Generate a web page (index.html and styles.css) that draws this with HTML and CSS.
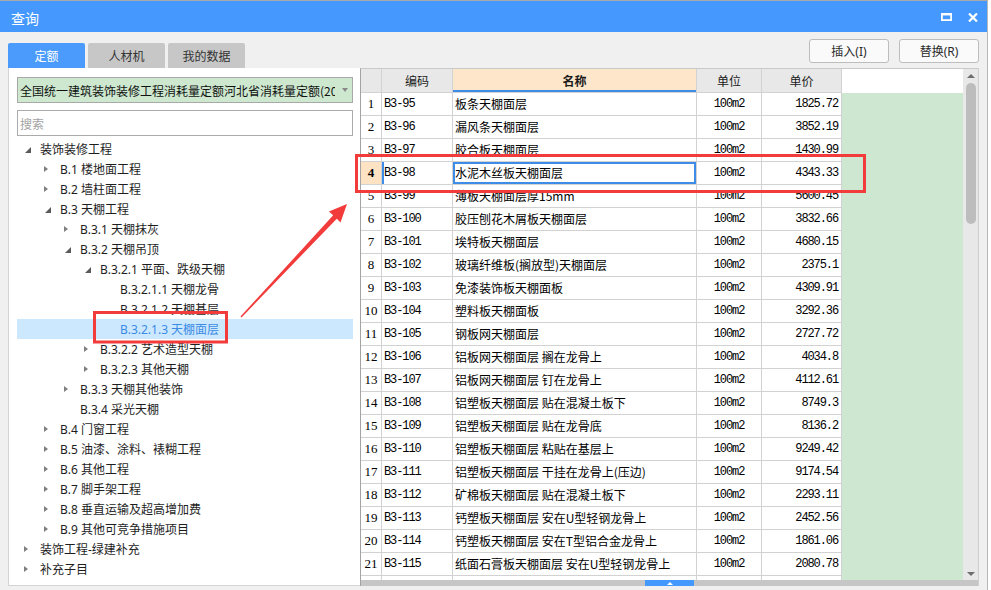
FILE: index.html
```html
<!DOCTYPE html>
<html lang="zh-CN">
<head>
<meta charset="utf-8">
<title>查询</title>
<link rel="stylesheet" href="styles.css">
</head>
<body>
<div class="window">
  <div class="titlebar">
    <span class="title">查询</span>
    <div class="win-btns">
      <svg class="ic-max" width="11" height="8" viewBox="0 0 11 8"><rect x="0.9" y="1.2" width="9.2" height="5.9" fill="none" stroke="#fff" stroke-width="1.8"/><rect x="0" y="0" width="11" height="2.4" fill="#fff"/></svg>
      <svg class="ic-close" width="10" height="9" viewBox="0 0 10 9"><path d="M1 0.5L9 8.5M9 0.5L1 8.5" stroke="#fff" stroke-width="2.2"/></svg>
    </div>
  </div>

  <div class="toolbar">
    <div class="tabs">
      <div class="tab active">定额</div>
      <div class="tab">人材机</div>
      <div class="tab">我的数据</div>
    </div>
    <div class="actions">
      <div class="btn">插入(I)</div>
      <div class="btn">替换(R)</div>
    </div>
  </div>

  <div class="main">
    <div class="left">
      <div class="combo">
        <span class="combo-text">全国统一建筑装饰装修工程消耗量定额河北省消耗量定额(2012)</span>
        <span class="combo-arrow"></span>
      </div>
      <div class="search">搜索</div>
      <div class="tree">
        <div class="node"><span class="tog exp"></span><span class="lbl">装饰装修工程</span></div>
        <div class="node l1"><span class="tog col"></span><span class="lbl">B.1 楼地面工程</span></div>
        <div class="node l1"><span class="tog col"></span><span class="lbl">B.2 墙柱面工程</span></div>
        <div class="node l1"><span class="tog exp"></span><span class="lbl">B.3 天棚工程</span></div>
        <div class="node l2"><span class="tog col"></span><span class="lbl">B.3.1 天棚抹灰</span></div>
        <div class="node l2"><span class="tog exp"></span><span class="lbl">B.3.2 天棚吊顶</span></div>
        <div class="node l3"><span class="tog exp"></span><span class="lbl">B.3.2.1 平面、跌级天棚</span></div>
        <div class="node l4"><span class="tog"></span><span class="lbl">B.3.2.1.1 天棚龙骨</span></div>
        <div class="node l4"><span class="tog"></span><span class="lbl">B.3.2.1.2 天棚基层</span></div>
        <div class="node l4 sel"><span class="tog"></span><span class="lbl">B.3.2.1.3 天棚面层</span></div>
        <div class="node l3"><span class="tog col"></span><span class="lbl">B.3.2.2 艺术造型天棚</span></div>
        <div class="node l3"><span class="tog col"></span><span class="lbl">B.3.2.3 其他天棚</span></div>
        <div class="node l2"><span class="tog col"></span><span class="lbl">B.3.3 天棚其他装饰</span></div>
        <div class="node l2"><span class="tog"></span><span class="lbl">B.3.4 采光天棚</span></div>
        <div class="node l1"><span class="tog col"></span><span class="lbl">B.4 门窗工程</span></div>
        <div class="node l1"><span class="tog col"></span><span class="lbl">B.5 油漆、涂料、裱糊工程</span></div>
        <div class="node l1"><span class="tog col"></span><span class="lbl">B.6 其他工程</span></div>
        <div class="node l1"><span class="tog col"></span><span class="lbl">B.7 脚手架工程</span></div>
        <div class="node l1"><span class="tog col"></span><span class="lbl">B.8 垂直运输及超高增加费</span></div>
        <div class="node l1"><span class="tog col"></span><span class="lbl">B.9 其他可竞争措施项目</span></div>
        <div class="node"><span class="tog col"></span><span class="lbl">装饰工程-绿建补充</span></div>
        <div class="node"><span class="tog col"></span><span class="lbl">补充子目</span></div>
      </div>
    </div>

    <div class="right">
      <div class="grid-wrap">
        <div class="grid">
          <div class="row head">
            <div class="c num"></div>
            <div class="c hc">编码</div>
            <div class="c hc name-head">名称</div>
            <div class="c hc">单位</div>
            <div class="c hc">单价</div>
            <div class="c fill-head"></div>
          </div>
          <div class="row"><div class="c num">1</div><div class="c code">B3-95</div><div class="c name">板条天棚面层</div><div class="c unit">100m2</div><div class="c price">1825.72</div><div class="c fill"></div></div>
          <div class="row"><div class="c num">2</div><div class="c code">B3-96</div><div class="c name">漏风条天棚面层</div><div class="c unit">100m2</div><div class="c price">3852.19</div><div class="c fill"></div></div>
          <div class="row"><div class="c num">3</div><div class="c code">B3-97</div><div class="c name">胶合板天棚面层</div><div class="c unit">100m2</div><div class="c price">1430.99</div><div class="c fill"></div></div>
          <div class="row cur"><div class="c num">4</div><div class="c code">B3-98</div><div class="c name focus">水泥木丝板天棚面层</div><div class="c unit">100m2</div><div class="c price">4343.33</div><div class="c fill"></div></div>
          <div class="row"><div class="c num">5</div><div class="c code">B3-99</div><div class="c name">薄板天棚面层厚15mm</div><div class="c unit">100m2</div><div class="c price">5600.45</div><div class="c fill"></div></div>
          <div class="row"><div class="c num">6</div><div class="c code">B3-100</div><div class="c name">胶压刨花木屑板天棚面层</div><div class="c unit">100m2</div><div class="c price">3832.66</div><div class="c fill"></div></div>
          <div class="row"><div class="c num">7</div><div class="c code">B3-101</div><div class="c name">埃特板天棚面层</div><div class="c unit">100m2</div><div class="c price">4680.15</div><div class="c fill"></div></div>
          <div class="row"><div class="c num">8</div><div class="c code">B3-102</div><div class="c name">玻璃纤维板(搁放型)天棚面层</div><div class="c unit">100m2</div><div class="c price">2375.1</div><div class="c fill"></div></div>
          <div class="row"><div class="c num">9</div><div class="c code">B3-103</div><div class="c name">免漆装饰板天棚面板</div><div class="c unit">100m2</div><div class="c price">4309.91</div><div class="c fill"></div></div>
          <div class="row"><div class="c num">10</div><div class="c code">B3-104</div><div class="c name">塑料板天棚面板</div><div class="c unit">100m2</div><div class="c price">3292.36</div><div class="c fill"></div></div>
          <div class="row"><div class="c num">11</div><div class="c code">B3-105</div><div class="c name">钢板网天棚面层</div><div class="c unit">100m2</div><div class="c price">2727.72</div><div class="c fill"></div></div>
          <div class="row"><div class="c num">12</div><div class="c code">B3-106</div><div class="c name">铝板网天棚面层 搁在龙骨上</div><div class="c unit">100m2</div><div class="c price">4034.8</div><div class="c fill"></div></div>
          <div class="row"><div class="c num">13</div><div class="c code">B3-107</div><div class="c name">铝板网天棚面层 钉在龙骨上</div><div class="c unit">100m2</div><div class="c price">4112.61</div><div class="c fill"></div></div>
          <div class="row"><div class="c num">14</div><div class="c code">B3-108</div><div class="c name">铝塑板天棚面层 贴在混凝土板下</div><div class="c unit">100m2</div><div class="c price">8749.3</div><div class="c fill"></div></div>
          <div class="row"><div class="c num">15</div><div class="c code">B3-109</div><div class="c name">铝塑板天棚面层 贴在龙骨底</div><div class="c unit">100m2</div><div class="c price">8136.2</div><div class="c fill"></div></div>
          <div class="row"><div class="c num">16</div><div class="c code">B3-110</div><div class="c name">铝塑板天棚面层 粘贴在基层上</div><div class="c unit">100m2</div><div class="c price">9249.42</div><div class="c fill"></div></div>
          <div class="row"><div class="c num">17</div><div class="c code">B3-111</div><div class="c name">铝塑板天棚面层 干挂在龙骨上(压边)</div><div class="c unit">100m2</div><div class="c price">9174.54</div><div class="c fill"></div></div>
          <div class="row"><div class="c num">18</div><div class="c code">B3-112</div><div class="c name">矿棉板天棚面层 贴在混凝土板下</div><div class="c unit">100m2</div><div class="c price">2293.11</div><div class="c fill"></div></div>
          <div class="row"><div class="c num">19</div><div class="c code">B3-113</div><div class="c name">钙塑板天棚面层 安在U型轻钢龙骨上</div><div class="c unit">100m2</div><div class="c price">2452.56</div><div class="c fill"></div></div>
          <div class="row"><div class="c num">20</div><div class="c code">B3-114</div><div class="c name">钙塑板天棚面层 安在T型铝合金龙骨上</div><div class="c unit">100m2</div><div class="c price">1861.06</div><div class="c fill"></div></div>
          <div class="row"><div class="c num">21</div><div class="c code">B3-115</div><div class="c name">纸面石膏板天棚面层 安在U型轻钢龙骨上</div><div class="c unit">100m2</div><div class="c price">2080.78</div><div class="c fill"></div></div>
          <div class="row"><div class="c num"></div><div class="c code"></div><div class="c name"></div><div class="c unit"></div><div class="c price"></div><div class="c fill"></div></div>
        </div>
        <div class="vscroll">
          <span class="arr-up"></span>
          <span class="thumb"></span>
          <span class="spacer"></span>
          <span class="arr-down"></span>
        </div>
      </div>
      <div class="hbar"><span class="handle"></span></div>
    </div>
  </div>

  <svg class="annot" width="991" height="590" viewBox="0 0 991 590">
    <rect x="94.5" y="312.5" width="132" height="29.5" fill="none" stroke="#f23c3c" stroke-width="3"/>
    <rect x="356.5" y="155.5" width="508" height="36" fill="none" stroke="#f23c3c" stroke-width="3"/>
    <polygon points="240.5,316.5 333.2,215.3 328.9,211.6 347,204 340.5,222.6 336.8,218.7 241.5,317.5" fill="#f23c3c"/>
  </svg>
</div>
</body>
</html>
```

FILE: styles.css
```css
* { box-sizing: border-box; }

html, body {
  margin: 0;
  padding: 0;
}

body {
  width: 991px;
  height: 590px;
  overflow: hidden;
  background: #ffffff;
  font-family: "Noto Sans", "Noto Sans CJK SC", sans-serif;
  font-size: 12px;
  color: #1e1e1e;
}

.window {
  position: relative;
  width: 988px;
  height: 590px;
  background: #f0f0f0;
  border-top: 1px solid #a9a9a9;
  border-right: 1px solid #b8b8b8;
}

/* title bar */
.titlebar {
  height: 31px;
  background: #4599fe;
  display: flex;
  align-items: center;
  justify-content: space-between;
  padding: 0 9px 0 11px;
  color: #ffffff;
}

.title {
  font-family: "Noto Sans CJK SC", sans-serif;
  font-size: 14px;
  line-height: 1;
  margin-top: 2px;
}

.win-btns {
  display: flex;
  align-items: center;
  gap: 16px;
  margin-top: 1px;
}

.ic-max, .ic-close { display: block; }

/* toolbar with tabs and buttons */
.toolbar {
  height: 36px;
  display: flex;
  justify-content: space-between;
  padding: 0 8px;
}

.tabs {
  display: flex;
  align-self: flex-end;
  gap: 3px;
}

.tab {
  width: 77px;
  height: 25px;
  background: #c7c7c7;
  color: #333333;
  border-radius: 2px 2px 0 0;
  display: flex;
  align-items: center;
  justify-content: center;
  font-family: "Noto Sans CJK SC", sans-serif;
  font-size: 12px;
}

.tab.active {
  background: #4a9bfb;
  color: #ffffff;
}

.actions {
  display: flex;
  gap: 10px;
  margin-top: 7px;
}

.btn {
  width: 80px;
  height: 24px;
  border: 1px solid #bdbdbd;
  border-radius: 3px;
  background: #fafafa;
  color: #2a2a2a;
  display: flex;
  align-items: center;
  justify-content: center;
  font-size: 12px;
}

/* main area */
.main {
  display: flex;
  height: 518px;
  padding: 0 8px;
}

.left {
  width: 352px;
  height: 518px;
  background: #ffffff;
  border-left: 1px solid #d4d4d4;
  border-bottom: 1px solid #d4d4d4;
  padding: 9px 7px 0 8px;
}

.combo {
  height: 26px;
  border: 1px solid #a9a9a9;
  background: #cde8cf;
  display: flex;
  align-items: center;
  padding-left: 2px;
  color: #111111;
}

.combo-text {
  width: 315px;
  white-space: nowrap;
  overflow: hidden;
  font-family: "Noto Sans CJK SC", sans-serif;
}

.combo-arrow {
  margin-left: 7px;
  width: 0;
  height: 0;
  border-left: 3.5px solid transparent;
  border-right: 3.5px solid transparent;
  border-top: 4px solid #8a8a8a;
}

.search {
  margin-top: 7px;
  height: 26px;
  border: 1px solid #ababab;
  background: #ffffff;
  color: #a3a3a3;
  display: flex;
  align-items: center;
  padding-left: 2px;
  font-family: "Noto Sans CJK SC", sans-serif;
}

.tree {
  margin-top: 3px;
}

.node {
  height: 20px;
  display: flex;
  align-items: center;
  white-space: nowrap;
}

.node.l1 { padding-left: 20px; }
.node.l2 { padding-left: 40px; }
.node.l3 { padding-left: 60px; }
.node.l4 { padding-left: 80px; }

.node.sel {
  background: #cce8ff;
  color: #3b8be4;
}

.tog {
  width: 23px;
  height: 20px;
  flex: none;
  display: flex;
  align-items: center;
  justify-content: flex-end;
}

.tog.col::before {
  content: "";
  width: 0;
  height: 0;
  border-left: 4px solid #7f7f7f;
  border-top: 3.5px solid transparent;
  border-bottom: 3.5px solid transparent;
  margin-right: 12px;
}

.tog.exp::before {
  content: "";
  width: 0;
  height: 0;
  border-left: 6px solid transparent;
  border-bottom: 6px solid #5a5a5a;
  margin-right: 9px;
  margin-top: 2px;
}

.lbl {
  line-height: 20px;
  margin-top: 2px;
}

/* right grid panel */
.right {
  width: 619px;
  height: 518px;
  background: #ffffff;
  border-left: 1px solid #a3a3a3;
  border-top: 1px solid #c9c9c9;
  border-right: 1px solid #cfcfcf;
  display: flex;
  flex-direction: column;
}

.grid-wrap {
  display: flex;
  height: 511px;
}

.grid {
  flex: 1;
  overflow: hidden;
}

.row {
  display: grid;
  grid-template-columns: 21px 71px 244px 65px 80px 1fr;
  height: 23px;
}

.row.head {
  height: 24px;
}

.c {
  border-right: 1px solid #d2d2d2;
  border-bottom: 1px solid #d2d2d2;
  line-height: 22px;
  white-space: nowrap;
  overflow: hidden;
  color: #000000;
}

.head .c { line-height: 23px; }

.hc {
  background: #e8e8e8;
  text-align: center;
  font-family: "Noto Sans CJK SC", sans-serif;
  color: #1a1a1a;
}

.head .num { background: #e8e8e8; }

.name-head {
  background: #fde6c9;
  font-weight: bold;
  box-shadow: inset 0 -2px 0 #3d8de8;
}

.fill-head {
  border: none;
  background: #ffffff;
}

.fill {
  border: none;
  background: #cee7d1;
}

.num {
  text-align: center;
  font-family: "Liberation Serif", serif;
  font-size: 13px;
}

.cur .num {
  background: #fde3c4;
  font-weight: bold;
}

.cur .code {
  box-shadow: inset 2px 0 0 #3d8de8;
}

.code {
  padding-left: 2px;
  font-family: "Liberation Mono", monospace;
  font-size: 12px;
  letter-spacing: -1.1px;
}

.name {
  padding-left: 2px;
  font-family: "Noto Sans CJK SC", sans-serif;
  font-size: 12px;
}

.name.focus {
  box-shadow: inset 0 0 0 2px #3d8de8;
}

.unit {
  text-align: center;
  font-family: "Liberation Mono", monospace;
  font-size: 12px;
  letter-spacing: -1.1px;
}

.price {
  text-align: right;
  padding-right: 3px;
  font-family: "Liberation Mono", monospace;
  font-size: 12px;
  letter-spacing: -1.1px;
}

.vscroll {
  width: 15px;
  flex: none;
  background: #e8e8e8;
  display: flex;
  flex-direction: column;
  align-items: center;
  padding: 5px 0 4px;
}

.arr-up {
  width: 0;
  height: 0;
  border-left: 4px solid transparent;
  border-right: 4px solid transparent;
  border-bottom: 4px solid #6e6e6e;
}

.thumb {
  margin-top: 5px;
  width: 10px;
  height: 141px;
  border-radius: 5px;
  background: #bdbdbd;
}

.spacer { flex: 1; }

.arr-down {
  width: 0;
  height: 0;
  border-left: 4px solid transparent;
  border-right: 4px solid transparent;
  border-top: 4px solid #6e6e6e;
}

.hbar {
  height: 6px;
  background: #c6c6c6;
  display: flex;
  justify-content: center;
}

.handle {
  width: 49px;
  height: 6px;
  background: #4499ff;
  display: flex;
  align-items: center;
  justify-content: center;
}

.handle::before {
  content: "";
  width: 0;
  height: 0;
  border-left: 3px solid transparent;
  border-right: 3px solid transparent;
  border-bottom: 3px solid #ffffff;
}

/* annotation overlay (red box + arrow drawn over the UI) */
.annot {
  position: absolute;
  left: 0;
  top: -1px;
  pointer-events: none;
}
```
